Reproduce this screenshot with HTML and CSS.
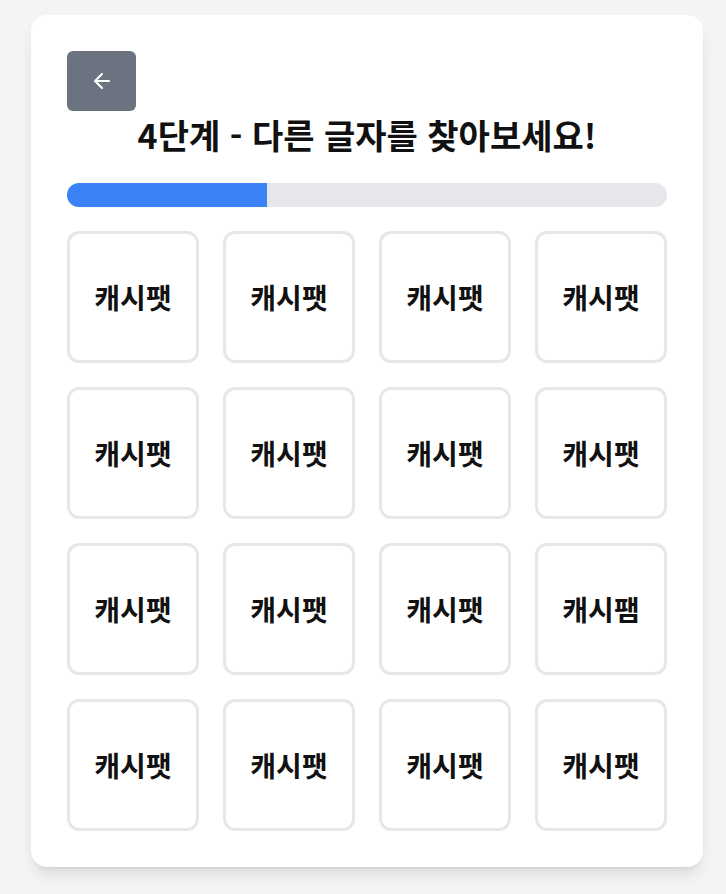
FILE: index.html
```html
<!DOCTYPE html>
<html lang="ko">
	<head>
		<meta name="viewport" content="width=device-width, initial-scale=1.0" />
		<meta charset="UTF-8" />
		<title>다른 글자 찾기</title>
		<link rel="stylesheet" href="styles.css">
	</head>
	<body>
		<div class="page">
			<div class="card">
				<button class="back" type="button" aria-label="뒤로">
					<svg width="24" height="24" viewBox="0 0 24 24" fill="none" stroke="#fff" stroke-width="2" stroke-linecap="round" stroke-linejoin="round">
						<path d="M19 12H5"/>
						<path d="M12 19l-7-7 7-7"/>
					</svg>
				</button>
				<h1 class="title">4단계 - 다른 글자를 찾아보세요!</h1>
				<div class="progress">
					<div class="progress-fill" style="width: 33.33%"></div>
				</div>
				<div class="grid">
					<div class="tile">캐시팻</div>
					<div class="tile">캐시팻</div>
					<div class="tile">캐시팻</div>
					<div class="tile">캐시팻</div>
					<div class="tile">캐시팻</div>
					<div class="tile">캐시팻</div>
					<div class="tile">캐시팻</div>
					<div class="tile">캐시팻</div>
					<div class="tile">캐시팻</div>
					<div class="tile">캐시팻</div>
					<div class="tile">캐시팻</div>
					<div class="tile">캐시팸</div>
					<div class="tile">캐시팻</div>
					<div class="tile">캐시팻</div>
					<div class="tile">캐시팻</div>
					<div class="tile">캐시팻</div>
				</div>
			</div>
		</div>
	</body>
</html>
```

FILE: styles.css
```css
* {
	margin: 0;
	padding: 0;
	box-sizing: border-box;
}
body {
	background: #f3f4f6;
	font-family: "Noto Sans CJK KR", "Noto Sans", sans-serif;
	color: #111;
}
.page {
	padding: 15px 23px 28px 31px;
}
.card {
	background: #fff;
	border-radius: 16px;
	padding: 36px;
	box-shadow: 0 10px 15px -3px rgba(0,0,0,0.1), 0 4px 6px -4px rgba(0,0,0,0.1);
}
.back {
	display: flex;
	align-items: center;
	justify-content: center;
	width: 69px;
	height: 60px;
	border: none;
	border-radius: 6px;
	background: #6b7280;
	cursor: pointer;
}
.title {
	font-size: 34px;
	font-weight: 700;
	line-height: 48px;
	text-align: center;
	margin-bottom: 24px;
}
.progress {
	height: 24px;
	border-radius: 9999px;
	background: #e5e7eb;
	overflow: hidden;
	margin-bottom: 24px;
}
.progress-fill {
	height: 100%;
	background: #3b82f6;
}
.grid {
	display: grid;
	grid-template-columns: repeat(4, 1fr);
	gap: 24px;
}
.tile {
	aspect-ratio: 1 / 1;
	display: flex;
	align-items: center;
	justify-content: center;
	border: 3px solid #e5e7eb;
	border-radius: 12px;
	font-size: 28px;
	font-weight: 700;
	cursor: pointer;
}
```
